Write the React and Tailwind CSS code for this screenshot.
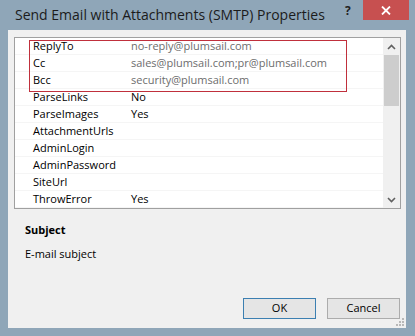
import React from 'react';

const rows = [
  { name: 'ReplyTo', value: 'no-reply@plumsail.com', dim: true },
  { name: 'Cc', value: 'sales@plumsail.com;pr@plumsail.com', dim: true },
  { name: 'Bcc', value: 'security@plumsail.com', dim: true },
  { name: 'ParseLinks', value: 'No' },
  { name: 'ParseImages', value: 'Yes' },
  { name: 'AttachmentUrls', value: '' },
  { name: 'AdminLogin', value: '' },
  { name: 'AdminPassword', value: '' },
  { name: 'SiteUrl', value: '' },
  { name: 'ThrowError', value: 'Yes' },
];

function Chevron({ down }) {
  return (
    <svg width="9" height="6" viewBox="0 0 9 6" className="block">
      <path
        d={down ? 'M1 1 L4.5 4.5 L8 1' : 'M1 5 L4.5 1.5 L8 5'}
        fill="none"
        stroke="#606060"
        strokeWidth="1.6"
      />
    </svg>
  );
}

function PropertyGrid() {
  return (
    <div className="relative flex w-[387px] h-[172px] border border-[#a0a0a0] bg-white">
      <div className="flex-1 flex flex-col">
        {rows.map((r) => (
          <div key={r.name} className="flex h-[17px] items-center border-b border-[#f5f5f5]">
            <div className="w-[116px] pl-[18px] text-black">{r.name}</div>
            <div className={r.dim ? 'text-[#6d6d6d]' : 'text-black'}>{r.value}</div>
          </div>
        ))}
      </div>
      <div className="w-[17px] flex flex-col bg-[#f0f0f0]">
        <div className="h-[17px] flex items-center justify-center">
          <Chevron />
        </div>
        <div className="mx-[1px] h-[51px] bg-[#cdcdcd]" />
        <div className="flex-1" />
        <div className="h-[17px] flex items-center justify-center">
          <Chevron down />
        </div>
      </div>
      {/* highlight box */}
      <div className="absolute left-[14px] top-[2px] w-[318px] h-[52px] border border-[#c0303c]" />
    </div>
  );
}

export default function App() {
  return (
    <div
      className="w-[415px] h-[336px] bg-[#8fa6b8] flex flex-col text-[11px] overflow-hidden"
      style={{ fontFamily: '"Open Sans", "Noto Sans", sans-serif' }}
    >
      {/* title bar */}
      <div className="h-[30px] flex items-start relative">
        <div className="pl-[15px] pt-[4px] text-[14px] text-[#1b1b1b]">
          Send Email with Attachments (SMTP) Properties
        </div>
        <div className="absolute left-[345px] top-[2px] text-[12px] font-bold text-[#222]">?</div>
        <div className="absolute left-[363px] top-0 w-[46px] h-[20px] bg-[#c75050] flex items-center justify-center">
          <svg width="10" height="9" viewBox="0 0 10 9">
            <path d="M1 0.5 L9 8.5 M9 0.5 L1 8.5" stroke="white" strokeWidth="1.8" />
          </svg>
        </div>
      </div>

      {/* client */}
      <div className="ml-[8px] w-[398px] h-[298px] bg-[#f0f0f0] flex flex-col relative">
        <div className="pl-[6px] pt-[7px]">
          <PropertyGrid />
        </div>
        <div className="pl-[17px] mt-[13px] font-bold text-black">Subject</div>
        <div className="pl-[17px] mt-[7px] text-black">E-mail subject</div>
        <div className="flex-1" />
        <div className="flex justify-end gap-[11px] pr-[6px] pb-[9px]">
          <button className="w-[73px] h-[21px] border border-[#3c7fb1] bg-[#e5e5e5] text-black">
            OK
          </button>
          <button className="w-[73px] h-[21px] border border-[#acacac] bg-[#e5e5e5] text-black">
            Cancel
          </button>
        </div>
        <svg width="10" height="10" viewBox="0 0 10 10" className="absolute right-[1px] bottom-[1px]">
          <g fill="#b8b8b8">
            <rect x="7" y="1" width="2" height="2" />
            <rect x="4" y="4" width="2" height="2" />
            <rect x="7" y="4" width="2" height="2" />
            <rect x="1" y="7" width="2" height="2" />
            <rect x="4" y="7" width="2" height="2" />
            <rect x="7" y="7" width="2" height="2" />
          </g>
        </svg>
      </div>
    </div>
  );
}
